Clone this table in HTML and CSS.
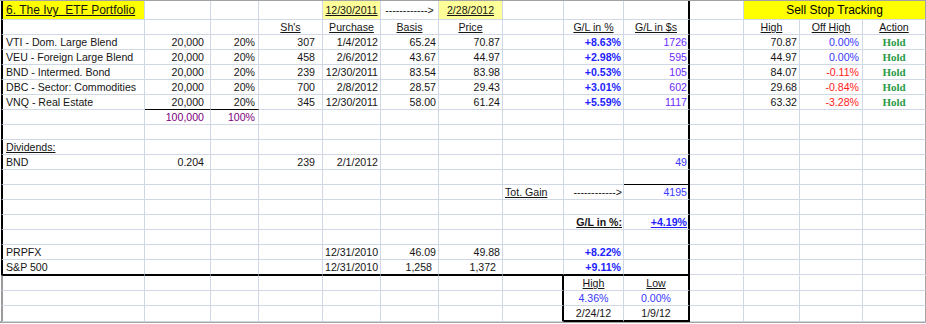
FILE: index.html
```html
<!DOCTYPE html>
<html>
<head>
<meta charset="utf-8">
<link rel="stylesheet" href="styles.css">
</head>
<body>
<div class="sheet">
  <div class="r r1">
    <span class="title"><span class="u">6. The Ivy&nbsp; ETF Portfolio</span></span>
    <span></span><span></span><span></span>
    <span class="ctr lt"><span class="u">12/30/2011</span></span>
    <span class="ctr arrow">------------&gt;</span>
    <span class="ctr lt"><span class="u">2/28/2012</span></span>
    <span></span><span></span><span></span><span></span>
    <span class="sst">Sell Stop Tracking</span>
  </div>
  <div class="r">
    <span></span><span></span><span></span>
    <span class="ctr"><span class="u">Sh's</span></span>
    <span class="ctr"><span class="u">Purchase</span></span>
    <span class="ctr"><span class="u">Basis</span></span>
    <span class="ctr"><span class="u">Price</span></span>
    <span></span>
    <span class="ctr"><span class="u">G/L in %</span></span>
    <span class="ctr"><span class="u">G/L in $s</span></span>
    <span></span>
    <span class="ctr"><span class="u">High</span></span>
    <span class="ctr"><span class="u">Off High</span></span>
    <span class="ctr"><span class="u">Action</span></span>
  </div>
  <div class="r">
    <span>VTI - Dom. Large Blend</span>
    <span class="n p6">20,000</span><span class="n p3">20%</span><span class="n p7">307</span>
    <span class="n">1/4/2012</span><span class="n">65.24</span><span class="n">70.87</span><span></span>
    <span class="n gl">+8.63%</span><span class="n p1 gd">1726</span><span></span>
    <span class="n">70.87</span><span class="n p3 bl">0.00%</span><span class="hold">Hold</span>
  </div>
  <div class="r">
    <span>VEU - Foreign Large Blend</span>
    <span class="n p6">20,000</span><span class="n p3">20%</span><span class="n p7">458</span>
    <span class="n">2/6/2012</span><span class="n">43.67</span><span class="n">44.97</span><span></span>
    <span class="n gl">+2.98%</span><span class="n p1 gd">595</span><span></span>
    <span class="n">44.97</span><span class="n p3 bl">0.00%</span><span class="hold">Hold</span>
  </div>
  <div class="r">
    <span>BND - Intermed. Bond</span>
    <span class="n p6">20,000</span><span class="n p3">20%</span><span class="n p7">239</span>
    <span class="n">12/30/2011</span><span class="n">83.54</span><span class="n">83.98</span><span></span>
    <span class="n gl">+0.53%</span><span class="n p1 gd">105</span><span></span>
    <span class="n">84.07</span><span class="n p3 rd">-0.11%</span><span class="hold">Hold</span>
  </div>
  <div class="r">
    <span>DBC - Sector: Commodities</span>
    <span class="n p6">20,000</span><span class="n p3">20%</span><span class="n p7">700</span>
    <span class="n">2/8/2012</span><span class="n">28.57</span><span class="n">29.43</span><span></span>
    <span class="n gl">+3.01%</span><span class="n p1 gd">602</span><span></span>
    <span class="n">29.68</span><span class="n p3 rd">-0.84%</span><span class="hold">Hold</span>
  </div>
  <div class="r">
    <span>VNQ - Real Estate</span>
    <span class="n p6 bb">20,000</span><span class="n p3 bb">20%</span><span class="n p7">345</span>
    <span class="n">12/30/2011</span><span class="n">58.00</span><span class="n">61.24</span><span></span>
    <span class="n gl">+5.59%</span><span class="n p1 gd">1117</span><span></span>
    <span class="n">63.32</span><span class="n p3 rd">-3.28%</span><span class="hold">Hold</span>
  </div>
  <div class="r">
    <span></span>
    <span class="n p6 pu">100,000</span><span class="n p3 pu">100%</span>
    <span></span><span></span><span></span><span></span><span></span><span></span><span></span><span></span><span></span><span></span><span></span>
  </div>
  <div class="r">
    <span></span><span></span><span></span><span></span><span></span><span></span><span></span><span></span><span></span><span></span><span></span><span></span><span></span><span></span>
  </div>
  <div class="r">
    <span><span class="u">Dividends:</span></span>
    <span></span><span></span><span></span><span></span><span></span><span></span><span></span><span></span><span></span><span></span><span></span><span></span><span></span>
  </div>
  <div class="r">
    <span>BND</span>
    <span class="n p6">0.204</span><span></span><span class="n p7">239</span>
    <span class="n">2/1/2012</span><span></span><span></span><span></span><span></span>
    <span class="n p1 bl">49</span>
    <span></span><span></span><span></span><span></span>
  </div>
  <div class="r">
    <span></span><span></span><span></span><span></span><span></span><span></span><span></span><span></span><span></span>
    <span class="bb"></span>
    <span></span><span></span><span></span><span></span>
  </div>
  <div class="r">
    <span></span><span></span><span></span><span></span><span></span><span></span><span></span>
    <span><span class="u">Tot. Gain</span></span>
    <span class="n p1">------------&gt;</span>
    <span class="n p1 bl">4195</span>
    <span></span><span></span><span></span><span></span>
  </div>
  <div class="r">
    <span></span><span></span><span></span><span></span><span></span><span></span><span></span><span></span><span></span><span></span><span></span><span></span><span></span><span></span>
  </div>
  <div class="r">
    <span></span><span></span><span></span><span></span><span></span><span></span><span></span><span></span>
    <span class="n p1 b"><span class="u">G/L in %:</span></span>
    <span class="n p1 gl"><span class="u">+4.19%</span></span>
    <span></span><span></span><span></span><span></span>
  </div>
  <div class="r">
    <span></span><span></span><span></span><span></span><span></span><span></span><span></span><span></span><span></span><span></span><span></span><span></span><span></span><span></span>
  </div>
  <div class="r">
    <span>PRPFX</span>
    <span></span><span></span><span></span>
    <span class="n">12/31/2010</span><span class="n">46.09</span><span class="n">49.88</span><span></span>
    <span class="n gl">+8.22%</span>
    <span></span><span></span><span></span><span></span><span></span>
  </div>
  <div class="r bk">
    <span>S&amp;P 500</span>
    <span></span><span></span><span></span>
    <span class="n">12/31/2010</span><span class="n p6">1,258</span><span class="n p6">1,372</span><span></span>
    <span class="n gl">+9.11%</span>
    <span></span><span></span><span></span><span></span><span></span>
  </div>
  <div class="r lo r19">
    <span></span><span></span><span></span><span></span><span></span><span></span><span></span>
    <span class="bx"></span>
    <span class="ctr"><span class="u">High</span></span>
    <span class="ctr"><span class="u">Low</span></span>
    <span></span><span></span><span></span><span></span>
  </div>
  <div class="r lo">
    <span></span><span></span><span></span><span></span><span></span><span></span><span></span>
    <span class="bx"></span>
    <span class="ctr bl">4.36%</span>
    <span class="ctr bl">0.00%</span>
    <span></span><span></span><span></span><span></span>
  </div>
  <div class="r lo">
    <span></span><span></span><span></span><span></span><span></span><span></span><span></span>
    <span class="bx"></span>
    <span class="ctr bt">2/24/12</span>
    <span class="ctr bt">1/9/12</span>
    <span></span><span></span><span></span><span></span>
  </div>
</div>
</body>
</html>
```

FILE: styles.css
```css
body {
  margin: 0;
  background: #fff;
  font-family: "Liberation Sans", Arial, sans-serif;
  font-size: 10.6px;
  color: #151515;
}

.sheet {
  width: 926px;
  box-sizing: border-box;
  padding-left: 1px;
  border-top: 1px solid #a3a3a3;
  border-bottom: 2px solid #a3a3a3;
}

.r {
  display: grid;
  grid-template-columns: 144px 66px 48px 64px 58px 58px 64px 61px 60px 66px 54px 56px 63px 63px;
  height: 15px;
  line-height: 14px;
}

.r > span {
  box-sizing: border-box;
  border-right: 1px solid #d0d7e5;
  border-bottom: 1px solid #d0d7e5;
  padding: 0 2px;
  white-space: nowrap;
  min-width: 0;
}

.r > span:first-child {
  border-left: 2px solid #000;
  padding-left: 3px;
}

.r > span:nth-child(10) {
  border-right: 2px solid #000;
}

.r > span:last-child {
  border-right-color: #a3a3a3;
}

.r1 {
  height: 19px;
  line-height: 18px;
}

.title {
  background: #ffff00;
  font-size: 12px;
}

.lt {
  background: #ffff99;
}

.sst {
  grid-column: span 3;
  background: #ffff00;
  font-size: 12px;
  text-align: center;
  color: #000;
}

.u {
  text-decoration: underline;
  text-underline-offset: 1px;
}

.ctr { text-align: center; }
.n { text-align: right; }
.r > .p1 { padding-right: 1px; }
.r > .p3 { padding-right: 3px; }
.r > .p6 { padding-right: 6px; }
.r > .p7 { padding-right: 7px; }
.b { font-weight: bold; }

.gl {
  font-weight: bold;
  color: #2222ff;
}

.gd { color: #6a2bff; }
.bl { color: #3838ff; }
.rd { color: #ff1a1a; }
.pu { color: #800080; }

.hold {
  text-align: center;
  font-family: "Liberation Serif", "Times New Roman", serif;
  font-weight: bold;
  font-size: 11px;
  color: #2a9a48;
}

.r > .bb { border-bottom-color: #000; }

.bk > span:nth-child(-n+10) {
  border-bottom-color: #000;
}

.r19 {
  height: 16px;
}

.r19 > span {
  border-top: 1px solid #fff;
}

.r19 > span:nth-child(-n+10) {
  border-top-color: #000;
}

.lo > span:first-child {
  border-left-color: #9a9a9a;
}

.r > .bx {
  border-right: 2px solid #000;
}

.r > .bt {
  border-bottom: 2px solid #000;
}
```
